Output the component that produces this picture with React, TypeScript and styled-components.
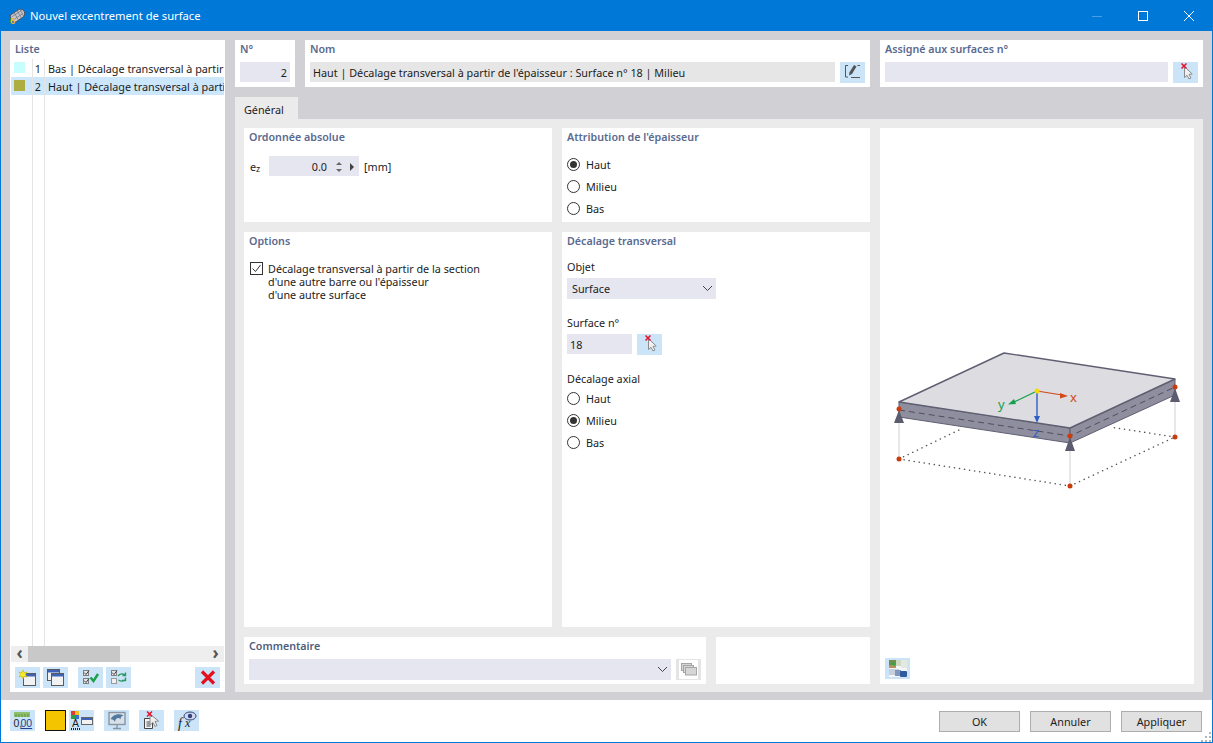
import styled, { createGlobalStyle } from "styled-components";

const GlobalStyle = createGlobalStyle`
  html, body {
    margin: 0;
    padding: 0;
    background: #fff;
    font-family: "Noto Sans", "Liberation Sans", sans-serif;
    font-size: 10.8px;
    color: #1c1c1c;
  }
`;

const UnitsDigits = styled.text`
  font-family: "Liberation Sans", sans-serif;
  font-size: 10.5px;
`;

const FormulaGlyph = styled.text`
  font-family: "Liberation Serif", serif;
  font-style: italic;
`;

const TitleDigit = styled.text`
  font-family: "Liberation Sans", sans-serif;
  font-size: 9.5px;
  font-weight: 700;
`;

const WindowIcon = ({ x, y, w = 12, h = 12 }: { x: number; y: number; w?: number; h?: number }) => (
  <g>
    <rect x={x + 0.5} y={y + 0.5} width={w} height={h} fill="#f2f2f2" stroke="#5a5a5a" />
    <rect x={x + 1} y={y + 1} width={w - 1} height={2.5} fill="#3f62b8" />
  </g>
);

const Tick = ({ x, y }: { x: number; y: number }) => (
  <g>
    <rect x={x + 0.5} y={y + 0.5} width={5} height={5} fill="#e4e6ea" stroke="#808080" />
    <path d={`M${x + 1} ${y + 2.5}l2 2l3-4`} fill="none" stroke="#444" />
  </g>
);

const PickCursor = () => (
  <g>
    <path d="M11.500 4.500v11l2.500-2.200l2 3.700l2-1l-2-3.600l3.200-.4z" fill="#f0f0f0" stroke="#8b8b8b" />
    <path d="M8.500 1.500l5 5M13.500 1.500l-5 5" stroke="#e8112d" strokeWidth="1.500" />
  </g>
);

const icons = {
  newItem: (
    <>
      <WindowIcon x={8} y={6} />
      <path d="M8 3l1 2.600l3-.6l-1.500 2.500l1.500 2.500l-3-.6l-1 2.600l-1-2.600l-3 .6l1.500-2.500L4 5l3 .6z" fill="#f6ea2a" stroke="#b9a90e" strokeWidth=".5" />
    </>
  ),
  copy: (
    <>
      <WindowIcon x={4} y={2} w={12} h={11} />
      <WindowIcon x={8} y={6} />
    </>
  ),
  checkAll: (
    <>
      <Tick x={5} y={3} />
      <Tick x={5} y={11} />
      <path d="M12.500 10.500l3 3.500l4.500-7" fill="none" stroke="#17a14a" strokeWidth="2.400" />
    </>
  ),
  checkSwap: (
    <>
      <Tick x={5} y={3} />
      <rect x={5.500} y={11.500} width={5} height={5} fill="#f0f0f0" stroke="#999" />
      <path d="M12 9c2-2.500 5-2.500 7-1M19.500 5.500V8.500h-3M20 12c-2 2.500-5 2.500-7.500 1M19.500 10.500v3h-3.500" fill="none" stroke="#2b9a62" strokeWidth="1.400" />
    </>
  ),
  remove: <path d="M7 4.500l12 12M19 4.500L7 16.500" stroke="#e3101f" strokeWidth="3.200" />,
  units: (
    <>
      <rect x={4} y={2} width={16} height={5} fill="#8fc06b" />
      <path d="M6 4v3M9 4v3M12 4v3M15 4v3M18 4v3" stroke="#5c8f3d" />
      <UnitsDigits x={3.500} y={17} fill="#222">0,</UnitsDigits>
      <UnitsDigits x={10.500} y={17} fill="#233c8f" textDecoration="underline">00</UnitsDigits>
    </>
  ),
  display: (
    <>
      <rect x={2} y={1} width={4} height={4} fill="#e23b2e" />
      <rect x={6} y={1} width={4} height={4} fill="#efc21d" />
      <rect x={2} y={5} width={4} height={4} fill="#2f9e44" />
      <rect x={6} y={5} width={4} height={4} fill="#3c6fd1" />
      <UnitsDigits x={3} y={17} fill="#222">A</UnitsDigits>
      <path d="M2 19h9" stroke="#222" strokeDasharray="1 1" strokeWidth="2" />
      <rect x={12.500} y={7.500} width={11} height={7} fill="#f2f2f2" stroke="#666" />
      <rect x={13} y={8} width={10} height={2} fill="#3f62b8" />
    </>
  ),
  monitor: (
    <>
      <rect x={5} y={2.500} width={16} height={12} fill="#d8e1e9" stroke="#8a95a0" strokeWidth="1.400" />
      <path d="M6.500 9.500c2-5 9-6.500 13-4c-2 .5-3 1.500-3 4c-1-2-5-2.500-5.500 2.500c-1-2-3-3-4.500-2.500z" fill="#52799e" />
      <path d="M13 15v3M9 18.500h8" stroke="#8a95a0" strokeWidth="1.400" />
    </>
  ),
  docPick: (
    <>
      <path d="M5.500 8.500h6l2 2v8h-8z" fill="#f5f5f5" stroke="#444" />
      <path d="M7.500 12h4M7.500 14h4M7.500 16h4" stroke="#444" />
      <path d="M11 4l0 11l3-2.500l2 4l2-1l-2-4l3.500-.5z" fill="#eee" stroke="#8b8b8b" />
      <path d="M8 1.500l5 5M13 1.500l-5 5" stroke="#e8112d" strokeWidth="1.500" />
    </>
  ),
  formula: (
    <>
      <FormulaGlyph x={4} y={18} fontSize="14" fill="#222">f</FormulaGlyph>
      <FormulaGlyph x={11} y={17} fontSize="12" fill="#222">x</FormulaGlyph>
      <ellipse cx={16} cy={6} rx={6} ry={4} fill="#cfd8ee" stroke="#33427a" />
      <circle cx={16} cy={6} r={2.200} fill="#33427a" />
    </>
  ),
  edit: (
    <>
      <path d="M8 3.500H5.500V15H8M11 15.500h9M17.500 3.500h2.500" fill="none" stroke="#555" />
      <path d="M14 3l2.500 1.500l-4.500 7.500l-3 1.500l.5-3.300z" fill="#555" />
    </>
  ),
  pick: <PickCursor />,
  comment: (
    <>
      <rect x={3} y={1} width={19} height={19} fill="#fff" />
      <rect x={5.500} y={4.500} width={10} height={7} fill="#d6d6d6" stroke="#a5a5a5" />
      <rect x={7.500} y={6.500} width={10} height={7} fill="#d6d6d6" stroke="#a5a5a5" />
      <rect x={9.500} y={8.500} width={11} height={7.500} fill="#d6d6d6" stroke="#a5a5a5" />
    </>
  ),
  model: (
    <>
      <rect x={4} y={2} width={18} height={17} fill="#f4f6f8" />
      <rect x={4} y={2} width={7} height={5} fill="#6f8f4a" />
      <rect x={11} y={2} width={5} height={6} fill="#cfd8c2" />
      <rect x={16} y={2} width={6} height={8} fill="#e3e8e0" />
      <rect x={4} y={7} width={7} height={3} fill="#b98f5a" />
      <path d="M6 5l4 2" stroke="#2fa84a" strokeWidth="2" />
      <rect x={4} y={11} width={10} height={6} fill="#c5cfdd" />
      <rect x={10} y={12} width={6} height={6} fill="#7f97bd" />
      <rect x={15} y={13} width={7} height={6} rx={1} fill="#2f5c9e" />
    </>
  ),
};

type IconName = keyof typeof icons;

const IconBtn = ({ name, disabled }: { name: IconName; disabled?: boolean }) => (
  <IconButton $disabled={disabled}>
    <svg width="25" height="21" viewBox="0 0 25 21">
      {icons[name]}
    </svg>
  </IconButton>
);

const Radio = ({ label, checked }: { label: string; checked?: boolean }) => (
  <RadioRow>
    <RadioCircle $checked={checked} />
    {label}
  </RadioRow>
);

const Chevron = () => (
  <svg width="11" height="7" viewBox="0 0 11 7">
    <path d="M1 1l4.500 4.500L10 1" fill="none" stroke="#444" />
  </svg>
);

const Plate = () => (
  <PlateSvg viewBox="880 340 314 160" width="314" height="160">
    <path d="M899 459L961 429M1175 437L1110 427M899 459L1070 486L1175 437" fill="none" stroke="#555" strokeDasharray="0.1 5" strokeLinecap="round" strokeWidth="1.500" />
    <path d="M899 420V459M1070 450V486M1175 402V437" stroke="#cfcfcf" />
    <path d="M899 402L1070 428V443L899 417Z" fill="#8e8e9e" stroke="#5f5f72" />
    <path d="M1070 428L1175 379V395L1070 443Z" fill="#8e8e9e" stroke="#5f5f72" />
    <path d="M1004 353L1175 379L1070 428L899 402Z" fill="#dcdce1" stroke="#5f5f72" strokeWidth="1.400" strokeLinejoin="round" />
    <path d="M899 410L1070 436L1175 387" fill="none" stroke="#4e4e5e" strokeDasharray="6 4" />
    <path d="M899 410L904 423H894Z M1070 437L1075 451H1065Z M1175 388L1180 402H1170Z" fill="#5c5c70" />
    <g fill="#c93c0c">
      <circle cx="899" cy="409" r="2.500" />
      <circle cx="1070" cy="436" r="2.500" />
      <circle cx="1175" cy="387" r="2.500" />
      <circle cx="899" cy="459" r="2.500" />
      <circle cx="1070" cy="486" r="2.500" />
      <circle cx="1175" cy="437" r="2.500" />
    </g>
    <path d="M1037 391L1062 395" stroke="#d2491b" strokeWidth="1.200" />
    <path d="M1068 396L1060 398.500V393Z" fill="#d2491b" />
    <path d="M1037 391L1014 402" stroke="#12a04a" strokeWidth="1.200" />
    <path d="M1008 404.500L1014 399L1016 404Z" fill="#12a04a" />
    <path d="M1037 391V416" stroke="#2f5fc4" strokeWidth="1.400" />
    <path d="M1037 423L1034 416H1040Z" fill="#2f5fc4" />
    <circle cx="1037" cy="391" r="2.500" fill="#f5d90a" />
    <AxisLabel x="1070" y="402" fill="#d2491b">x</AxisLabel>
    <AxisLabel x="998" y="409" fill="#12a04a">y</AxisLabel>
    <AxisLabel x="1033" y="437" fill="#2f5fc4">z</AxisLabel>
  </PlateSvg>
);

export default function App() {
  return (
    <Window>
      <GlobalStyle />
      <TitleBar>
        <svg width="20" height="18" viewBox="0 0 20 18">
          <path d="M1.500 8L9 3C11 1.800 14 2 15.200 4.500C16.300 6.800 15.500 9 13.500 10.500L7 15C4 15.500 0.500 12 1.500 8Z" fill="#c4c7ce" stroke="#4d4d55" />
          <path d="M5 5.500l4.500 7.500M8 3.500l4.500 7.500M11 2.500l3.500 6.500M2.500 10l10-6.500M4 13l10-6.500" stroke="#6d707a" strokeWidth=".7" />
          <TitleDigit x="1" y="17" fill="#f5b80f">6</TitleDigit>
        </svg>
        <TitleText>Nouvel excentrement de surface</TitleText>
        <WindowControls>
          <svg width="10" height="10" viewBox="0 0 10 10"><path d="M0 5.500H10" stroke="#4aa0e6" /></svg>
          <svg width="10" height="10" viewBox="0 0 10 10"><rect x=".5" y=".5" width="9" height="9" fill="none" stroke="#fff" /></svg>
          <svg width="10" height="10" viewBox="0 0 10 10"><path d="M0 0L10 10M10 0L0 10" stroke="#fff" /></svg>
        </WindowControls>
      </TitleBar>

      <Body>
        <ListCard>
          <CardTitle>Liste</CardTitle>
          <ListBody>
            <ListRow>
              <SwatchCell><Swatch $color="#c8fdfd" /></SwatchCell>
              <NumCell>1</NumCell>
              <NameCell>Bas | Décalage transversal à partir d</NameCell>
            </ListRow>
            <ListRow $selected>
              <SwatchCell><Swatch $color="#adad42" /></SwatchCell>
              <NumCell>2</NumCell>
              <NameCell>Haut | Décalage transversal à parti</NameCell>
            </ListRow>
            <ListFiller>
              <SwatchCell />
              <NumCell />
              <NameCell />
            </ListFiller>
          </ListBody>
          <ScrollBar>
            <ScrollArrow>‹</ScrollArrow>
            <ScrollTrack><ScrollThumb /></ScrollTrack>
            <ScrollArrow>›</ScrollArrow>
          </ScrollBar>
          <ListToolbar>
            <ButtonPair>
              <IconBtn name="newItem" />
              <IconBtn name="copy" />
            </ButtonPair>
            <ButtonPair>
              <IconBtn name="checkAll" />
              <IconBtn name="checkSwap" />
            </ButtonPair>
            <PushRight>
              <IconBtn name="remove" />
            </PushRight>
          </ListToolbar>
        </ListCard>

        <Main>
          <TopRow>
            <TopCard $width={60}>
              <CardTitle>N°</CardTitle>
              <FieldRow>
                <Input $align="right">2</Input>
              </FieldRow>
            </TopCard>
            <TopCard $width={565}>
              <CardTitle>Nom</CardTitle>
              <FieldRow>
                <Input $grow $gray>Haut | Décalage transversal à partir de l'épaisseur : Surface n° 18 | Milieu</Input>
                <IconBtn name="edit" />
              </FieldRow>
            </TopCard>
            <TopCard $width={323}>
              <CardTitle>Assigné aux surfaces n°</CardTitle>
              <FieldRow>
                <Input $grow />
                <IconBtn name="pick" />
              </FieldRow>
            </TopCard>
          </TopRow>

          <Tabs>
            <Tab>Général</Tab>
          </Tabs>

          <Panel>
            <Card>
              <CardTitle>Ordonnée absolue</CardTitle>
              <AbsRow>
                <EzLabel>e<sub>z</sub></EzLabel>
                <Input $width={90} $align="right">
                  <SpinValue>0.0</SpinValue>
                  <SpinArrows>
                    <ArrowUp />
                    <ArrowDown />
                  </SpinArrows>
                  <ArrowRight />
                </Input>
                <Unit>[mm]</Unit>
              </AbsRow>
            </Card>

            <Card>
              <CardTitle>Attribution de l'épaisseur</CardTitle>
              <RadioGroup $top={8}>
                <Radio label="Haut" checked />
                <Radio label="Milieu" />
                <Radio label="Bas" />
              </RadioGroup>
            </Card>

            <PreviewCard>
              <Plate />
              <PreviewTool>
                <IconBtn name="model" />
              </PreviewTool>
            </PreviewCard>

            <Card>
              <CardTitle>Options</CardTitle>
              <CheckRow>
                <CheckBox>
                  <svg width="11" height="11" viewBox="0 0 11 11">
                    <path d="M1.500 5.500l3 3l5-6.500" fill="none" stroke="#333" />
                  </svg>
                </CheckBox>
                <CheckText>
                  Décalage transversal à partir de la section
                  <br />
                  d'une autre barre ou l'épaisseur
                  <br />
                  d'une autre surface
                </CheckText>
              </CheckRow>
            </Card>

            <Card>
              <CardTitle>Décalage transversal</CardTitle>
              <FieldLabel $top={10}>Objet</FieldLabel>
              <Select $width={149}>
                Surface
                <Chevron />
              </Select>
              <FieldLabel $top={16}>Surface n°</FieldLabel>
              <InlineFields>
                <Input $width={65}>18</Input>
                <IconBtn name="pick" />
              </InlineFields>
              <FieldLabel $top={16} $bottom={0}>Décalage axial</FieldLabel>
              <RadioGroup $top={0}>
                <Radio label="Haut" />
                <Radio label="Milieu" checked />
                <Radio label="Bas" />
              </RadioGroup>
            </Card>

            <BottomRow>
              <CommentCard>
                <CommentTitle>Commentaire</CommentTitle>
                <FieldRow>
                  <Select $grow>
                    <span />
                    <Chevron />
                  </Select>
                  <IconBtn name="comment" disabled />
                </FieldRow>
              </CommentCard>
              <BlankCard />
            </BottomRow>
          </Panel>
        </Main>
      </Body>

      <Footer>
        <ButtonPair>
          <IconBtn name="units" />
        </ButtonPair>
        <ButtonPair>
          <ColorBox />
          <IconBtn name="display" />
        </ButtonPair>
        <IconBtn name="monitor" />
        <IconBtn name="docPick" />
        <IconBtn name="formula" />
        <FooterActions>
          <ActionButton>OK</ActionButton>
          <ActionButton>Annuler</ActionButton>
          <ActionButton>Appliquer</ActionButton>
        </FooterActions>
        <Grip width="11" height="11" viewBox="0 0 11 11">
          <path d="M8 1h2v2H8zM4 5h2v2H4zM8 5h2v2H8zM0 9h2v2H0zM4 9h2v2H4zM8 9h2v2H8z" fill="#b5b5b5" />
        </Grip>
      </Footer>
    </Window>
  );
}

const Window = styled.div`
  box-sizing: border-box;
  width: 1213px;
  height: 743px;
  display: flex;
  flex-direction: column;
  border: 1px solid #0078d7;
  border-top: 0;
  overflow: hidden;
  background: #fff;
`;

const TitleBar = styled.div`
  flex: none;
  height: 31px;
  display: flex;
  align-items: center;
  background: #0078d7;
  color: #fff;
  padding: 0 18px 0 8px;
`;

const TitleText = styled.div`
  margin-left: 1px;
  font-size: 11.2px;
  color: #fff;
`;

const WindowControls = styled.div`
  margin-left: auto;
  display: flex;
  gap: 36px;
`;

const Body = styled.div`
  flex: 1;
  display: flex;
  gap: 10px;
  padding: 9px 9px 8px;
  background: #d0d0d5;
  min-height: 0;
`;

const ListCard = styled.div`
  width: 215px;
  flex: none;
  display: flex;
  flex-direction: column;
  background: #fff;
`;

const CardTitle = styled.div`
  margin: 1px 5px 0;
  line-height: 16px;
  font-size: 10.7px;
  font-weight: 600;
  color: #5a6a90;
  white-space: nowrap;
`;

const ListBody = styled.div`
  flex: 1;
  display: flex;
  flex-direction: column;
  padding: 2px 1px 0;
  min-height: 0;
`;

const ListRow = styled.div<{ $selected?: boolean }>`
  display: flex;
  height: 18px;
  line-height: 20px;
  background: ${(p) => (p.$selected ? "#cce6fb" : "transparent")};
  white-space: nowrap;
`;

const ListFiller = styled.div`
  flex: 1;
  display: flex;
`;

const SwatchCell = styled.div`
  width: 21px;
  flex: none;
  padding: 3px 0 0 3px;
  box-sizing: border-box;
`;

const Swatch = styled.div<{ $color: string }>`
  width: 11px;
  height: 11px;
  background: ${(p) => p.$color};
`;

const NumCell = styled.div`
  width: 12px;
  flex: none;
  box-sizing: border-box;
  border-left: 1px solid #e4e4e4;
  padding-right: 3px;
  text-align: right;
`;

const NameCell = styled.div`
  flex: 1;
  min-width: 0;
  overflow: hidden;
  border-left: 1px solid #e4e4e4;
  padding-left: 3px;
`;

const ScrollBar = styled.div`
  flex: none;
  height: 16px;
  margin: 0 1px;
  display: flex;
  background: #eeeeee;
`;

const ScrollArrow = styled.div`
  width: 17px;
  flex: none;
  text-align: center;
  font-size: 17px;
  font-weight: 700;
  line-height: 14px;
  color: #555;
`;

const ScrollTrack = styled.div`
  flex: 1;
`;

const ScrollThumb = styled.div`
  width: 92px;
  height: 100%;
  background: #c8c8c8;
`;

const ListToolbar = styled.div`
  flex: none;
  display: flex;
  gap: 10px;
  padding: 5px 5px 4px;
`;

const ButtonPair = styled.div`
  display: flex;
  gap: 3px;
`;

const PushRight = styled.div`
  margin-left: auto;
`;

const IconButton = styled.div<{ $disabled?: boolean }>`
  flex: none;
  width: 25px;
  height: 21px;
  background: ${(p) => (p.$disabled ? "#e4e4e4" : "#cbe4f8")};

  svg {
    display: block;
  }
`;

const Main = styled.div`
  flex: 1;
  min-width: 0;
  display: flex;
  flex-direction: column;
`;

const TopRow = styled.div`
  flex: none;
  display: flex;
  gap: 10px;
`;

const TopCard = styled.div<{ $width: number }>`
  width: ${(p) => p.$width}px;
  height: 47px;
  background: #fff;
`;

const FieldRow = styled.div`
  display: flex;
  gap: 5px;
  padding: 5px 5px 0;
`;

const Input = styled.div<{ $width?: number; $grow?: boolean; $gray?: boolean; $align?: string }>`
  box-sizing: border-box;
  height: 20px;
  padding: 1px 3px 0;
  display: flex;
  justify-content: ${(p) => (p.$align === "right" ? "flex-end" : "flex-start")};
  align-items: center;
  white-space: nowrap;
  background: ${(p) => (p.$gray ? "#e6e6e6" : "#e6e6f0")};
  ${(p) => (p.$width ? `width: ${p.$width}px;` : "")}
  ${(p) => (p.$grow ? "flex: 1; min-width: 0;" : "")}
  ${(p) => (!p.$width && !p.$grow ? "flex: 1;" : "")}
`;

const Tabs = styled.div`
  flex: none;
  display: flex;
  margin-top: 10px;
`;

const Tab = styled.div`
  width: 63px;
  height: 22px;
  box-sizing: border-box;
  padding-left: 9px;
  line-height: 25px;
  background: #ebebeb;
`;

const Panel = styled.div`
  flex: 1;
  min-height: 0;
  display: grid;
  grid-template-columns: 308px 308px 314px;
  grid-template-rows: 94px 395px 47px;
  gap: 10px;
  padding: 9px 9px 8px;
  background: #ebebeb;
`;

const Card = styled.div`
  background: #fff;
  display: flex;
  flex-direction: column;
`;

const PreviewCard = styled(Card)`
  grid-column: 3;
  grid-row: 1 / span 3;
`;

const PlateSvg = styled.svg`
  display: block;
  margin-top: 212px;
`;

const AxisLabel = styled.text`
  font-family: "Noto Sans", sans-serif;
  font-size: 13px;
`;

const PreviewTool = styled.div`
  margin: auto 0 5px 5px;
`;

const AbsRow = styled.div`
  display: flex;
  align-items: center;
  margin-top: 11px;
  padding: 0 5px;
`;

const EzLabel = styled.div`
  width: 20px;
  padding-left: 1px;
  box-sizing: border-box;

  sub {
    font-size: 9px;
    line-height: 0;
    vertical-align: -1px;
  }
`;

const SpinValue = styled.span`
  margin-right: 8px;
`;

const SpinArrows = styled.div`
  width: 8px;
  display: flex;
  flex-direction: column;
  align-items: center;
  gap: 4px;
`;

const ArrowUp = styled.div`
  border: 3px solid transparent;
  border-top: 0;
  border-bottom: 3px solid #666;
`;

const ArrowDown = styled.div`
  border: 3px solid transparent;
  border-bottom: 0;
  border-top: 3px solid #666;
`;

const ArrowRight = styled.div`
  margin: 0 2px 0 7px;
  border: 4px solid transparent;
  border-right: 0;
  border-left: 4px solid #444;
`;

const Unit = styled.div`
  margin-left: 5px;
`;

const RadioGroup = styled.div<{ $top: number }>`
  margin-top: ${(p) => p.$top}px;
  padding: 0 5px;
`;

const RadioRow = styled.div`
  height: 22px;
  display: flex;
  align-items: center;
  gap: 6px;
`;

const RadioCircle = styled.div<{ $checked?: boolean }>`
  box-sizing: border-box;
  width: 13px;
  height: 13px;
  border: 1px solid #333;
  border-radius: 50%;
  background: #fff;
  position: relative;

  &::after {
    content: "";
    display: ${(p) => (p.$checked ? "block" : "none")};
    position: absolute;
    inset: 2px;
    border-radius: 50%;
    background: #333;
  }
`;

const CheckRow = styled.div`
  display: flex;
  gap: 5px;
  margin-top: 13px;
  padding: 0 6px;
`;

const CheckBox = styled.div`
  box-sizing: border-box;
  flex: none;
  width: 13px;
  height: 13px;
  border: 1px solid #333;

  svg {
    display: block;
  }
`;

const CheckText = styled.div`
  line-height: 13px;
`;

const FieldLabel = styled.div<{ $top: number; $bottom?: number }>`
  margin: ${(p) => p.$top}px 5px ${(p) => p.$bottom ?? 3}px;
  line-height: 16px;
`;

const Select = styled.div<{ $width?: number; $grow?: boolean }>`
  box-sizing: border-box;
  height: 21px;
  display: flex;
  align-items: center;
  justify-content: space-between;
  padding: 0 3px 0 5px;
  background: #e6e6f0;
  ${(p) => (p.$width ? `width: ${p.$width}px; margin-left: 5px;` : "")}
  ${(p) => (p.$grow ? "flex: 1;" : "")}
`;

const InlineFields = styled.div`
  display: flex;
  gap: 5px;
  padding: 0 5px;
`;

const BottomRow = styled.div`
  grid-column: 1 / span 2;
  display: flex;
  gap: 10px;
`;

const CommentCard = styled.div`
  width: 462px;
  background: #fff;
`;

const CommentTitle = styled(CardTitle)`
  color: #4f5d7d;
`;

const BlankCard = styled.div`
  flex: 1;
  background: #fff;
`;

const Footer = styled.div`
  flex: none;
  height: 42px;
  box-sizing: border-box;
  display: flex;
  gap: 10px;
  padding: 10px 10px 0 9px;
  position: relative;
`;

const ColorBox = styled.div`
  box-sizing: border-box;
  width: 21px;
  height: 21px;
  border: 1px solid #111;
  background: #f5c400;
`;

const FooterActions = styled.div`
  margin: 1px 0 0 auto;
  display: flex;
  gap: 10px;
`;

const ActionButton = styled.div`
  box-sizing: border-box;
  width: 81px;
  height: 21px;
  line-height: 19px;
  text-align: center;
  background: #e1e1e1;
  border: 1px solid #adadad;
`;

const Grip = styled.svg`
  position: absolute;
  right: 0;
  bottom: 0;
`;
